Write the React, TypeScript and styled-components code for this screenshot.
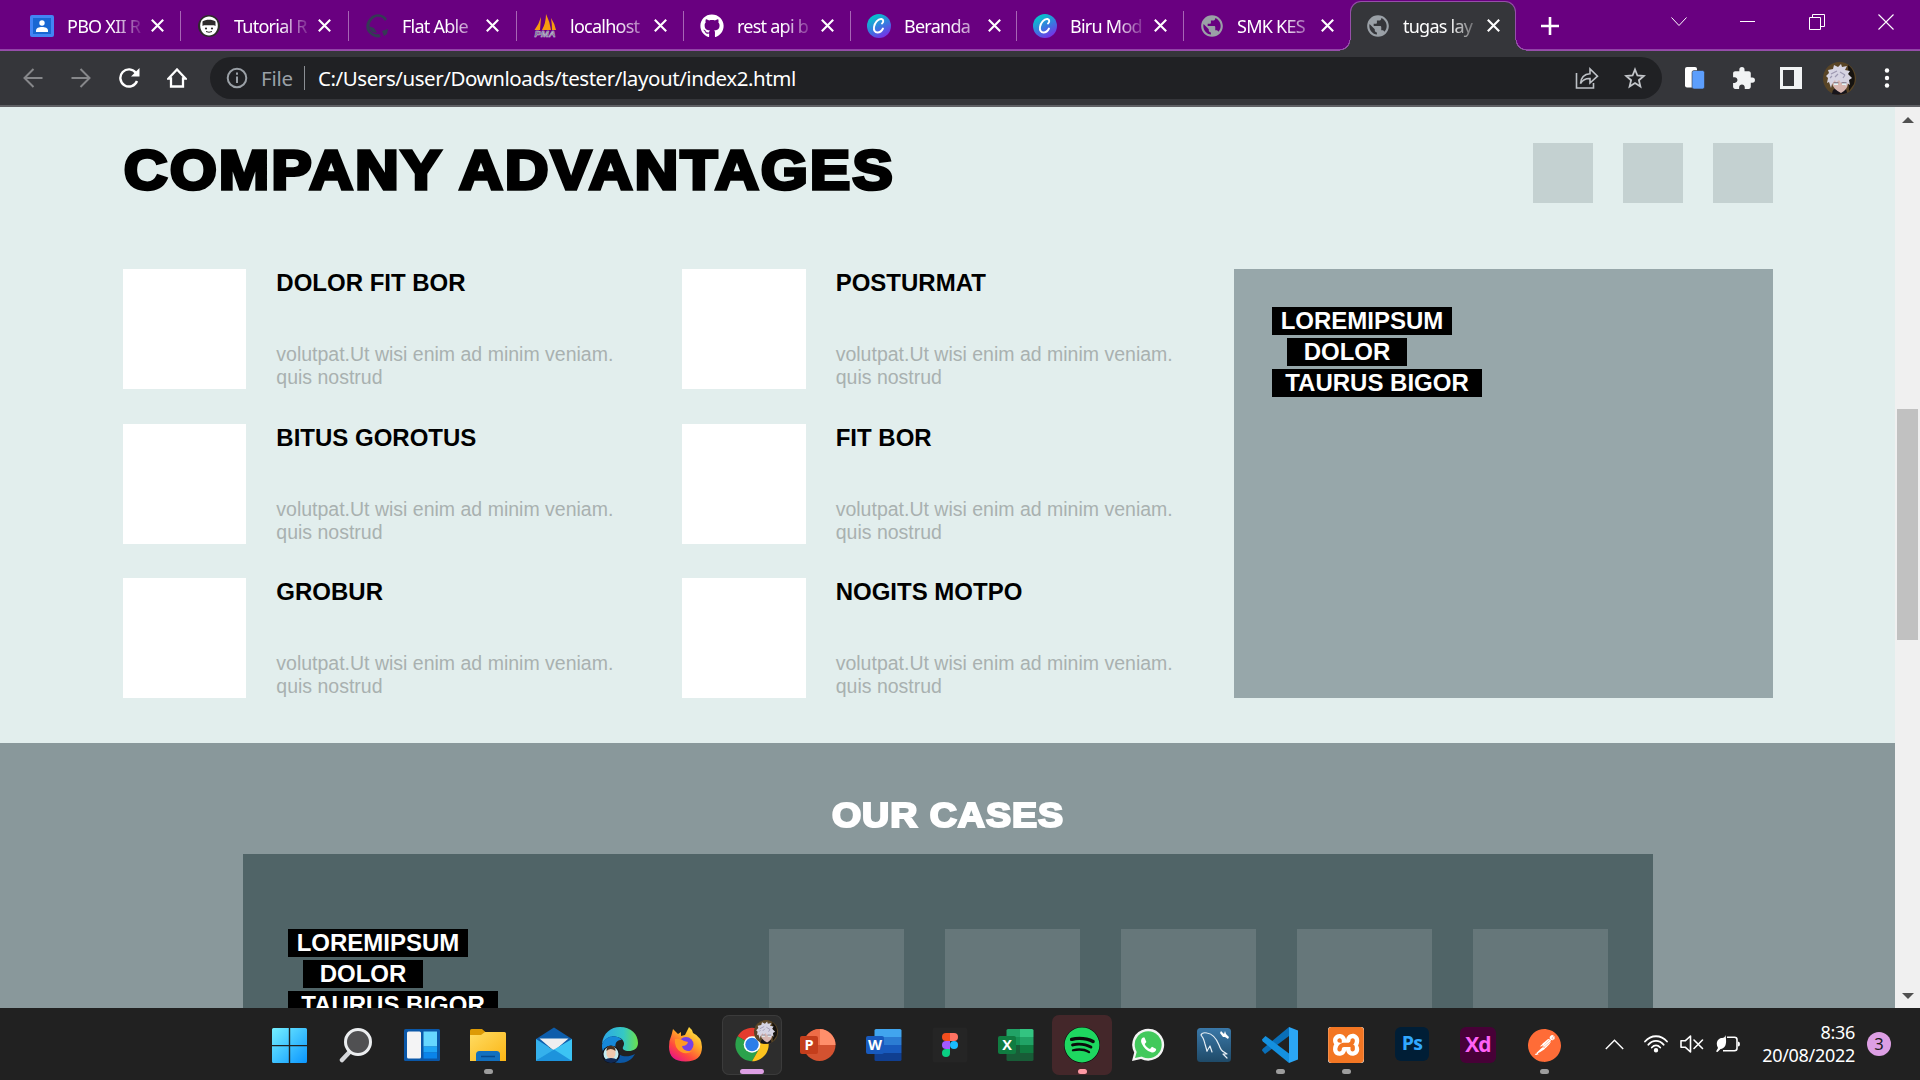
import React from "react";
import styled, { createGlobalStyle, css } from "styled-components";
import { FaGithub, FaSpotify } from "react-icons/fa";
import { SiPostman, SiXampp } from "react-icons/si";
import { MdExtension, MdPublic } from "react-icons/md";

const UI = `"Noto Sans", "Open Sans", sans-serif`;
const ARIAL = `"Liberation Sans", Arial, sans-serif`;

const GlobalStyle = createGlobalStyle`
  * { box-sizing: border-box; }
  html, body { margin: 0; padding: 0; overflow: hidden; }
  h1, h2, h3, p { margin: 0; }
  svg { display: block; flex: none; }
`;

const Screen = styled.div`
  width: 1920px;
  height: 1080px;
  display: flex;
  flex-direction: column;
  overflow: hidden;
  font-family: ${UI};
`;

/* ---------- tab strip ---------- */

const TabStrip = styled.div`
  height: 51px;
  flex: none;
  display: flex;
  background: linear-gradient(#690080 49px, #8d3fa3 49px, #9a52ad 51px);
  padding-left: 14px;
`;

const flare = css`
  content: "";
  position: absolute;
  bottom: 0;
  width: 11px;
  height: 11px;
`;

const TabBox = styled.div<{ $width: number; $active?: boolean }>`
  width: ${(p) => p.$width}px;
  height: 51px;
  flex: none;
  display: flex;
  align-items: center;
  padding-left: 16px;
  position: relative;
  ${(p) =>
    p.$active
      ? css`
          height: 50px;
          margin-top: 1px;
          padding-left: 15px;
          padding-bottom: 2px;
          background: #35363a;
          border: 1px solid #964fa9;
          border-bottom: 0;
          border-radius: 11px 11px 0 0;
          &::before {
            ${flare}
            left: -11px;
            background: radial-gradient(circle at 0 0, #690080 8.8px, #964fa9 9.2px, #964fa9 10px, #35363a 10.6px);
          }
          &::after {
            ${flare}
            right: -11px;
            background: radial-gradient(circle at 100% 0, #690080 8.8px, #964fa9 9.2px, #964fa9 10px, #35363a 10.6px);
          }
        `
      : ""}
`;

const TabIcon = styled.span`
  width: 24px;
  height: 24px;
  display: flex;
  align-items: center;
  justify-content: center;
`;

const TabTitle = styled.span<{ $fade: number }>`
  width: 80px;
  margin-left: 13px;
  font-size: 18px;
  line-height: 26px;
  letter-spacing: -0.75px;
  color: #fff;
  white-space: nowrap;
  mask-image: linear-gradient(90deg, #000 46px, transparent ${(p) => p.$fade}px);
`;

const TabClose = styled.span`
  margin-left: 4px;
`;

const TabDivider = styled.i<{ $hidden?: boolean }>`
  width: 1px;
  height: 30px;
  margin-left: auto;
  background: ${(p) => (p.$hidden ? "transparent" : "#a765b5")};
`;

const NewTab = styled.div`
  width: 67px;
  display: flex;
  align-items: center;
  justify-content: center;
`;

const WindowButtons = styled.div`
  margin-left: auto;
  display: flex;
`;

const WindowButton = styled.div`
  width: 69px;
  height: 43px;
  display: flex;
  align-items: center;
  justify-content: center;
`;

/* ---------- toolbar ---------- */

const Toolbar = styled.div`
  height: 54px;
  flex: none;
  display: flex;
  align-items: center;
  padding: 0 9px;
  background: #35363a;
`;

const ToolSlot = styled.span`
  width: 48px;
  height: 42px;
  flex: none;
  display: flex;
  align-items: center;
  justify-content: center;
`;

const Omnibox = styled.div`
  flex: 1;
  height: 42px;
  margin: 0 9px;
  padding: 0 3px 0 16px;
  border-radius: 21px;
  background: #202124;
  display: flex;
  align-items: center;
`;

const Scheme = styled.span`
  width: 43px;
  margin-left: 13px;
  font-size: 20.5px;
  line-height: 30px;
  letter-spacing: -0.2px;
  color: #9aa0a6;
`;

const SchemeRule = styled.i`
  width: 1px;
  height: 24px;
  background: #8b8f94;
`;

const Url = styled.span`
  flex: 1;
  margin-left: 13px;
  font-size: 20.5px;
  line-height: 30px;
  letter-spacing: -0.43px;
  color: #fff;
  white-space: nowrap;
`;

const ToolbarEdge = styled.div`
  height: 2px;
  flex: none;
  background: #5f6064;
`;

/* ---------- web page ---------- */

const Viewport = styled.div`
  height: 901px;
  flex: none;
  display: flex;
  overflow: hidden;
`;

const Page = styled.main`
  width: 1895px;
  height: 901px;
  overflow: hidden;
  font-family: ${ARIAL};
`;

const Advantages = styled.section`
  height: 636px;
  padding: 36px 122px 0 123px;
  background: #e2eeed;
`;

const AdvantagesHead = styled.header`
  height: 60px;
  display: flex;
  justify-content: space-between;
`;

const Title = styled.h1`
  padding-left: 1px;
  font-size: 54.6px;
  line-height: 56px;
  font-weight: 700;
  letter-spacing: 2.2px;
  white-space: nowrap;
  color: #000;
  -webkit-text-stroke: 3.6px #000;
  transform: scaleX(1.1);
  transform-origin: 0 50%;
`;

const Squares = styled.div`
  display: flex;
  gap: 30px;
`;

const Square = styled.div`
  width: 60px;
  height: 60px;
  background: #c4d1d1;
`;

const AdvantagesBody = styled.div`
  display: flex;
  justify-content: space-between;
  margin-top: 66px;
`;

const CardGrid = styled.div`
  display: grid;
  grid-template-columns: 559.4px 520px;
  grid-template-rows: repeat(3, 120px);
  row-gap: 34.5px;
`;

const Card = styled.article`
  display: flex;
  gap: 30px;
`;

const Thumb = styled.div`
  width: 123.3px;
  height: 120px;
  background: #fff;
`;

const CardTitle = styled.h3`
  font-size: 24px;
  line-height: 27px;
  font-weight: 700;
  color: #000;
`;

const CardText = styled.p`
  width: 350px;
  margin-top: 47px;
  font-size: 19.5px;
  line-height: 23px;
  color: #a9b1b0;
`;

const Panel = styled.aside`
  width: 539px;
  height: 429px;
  padding: 38px;
  background: #97a7aa;
`;

const LabelStack = styled.div`
  display: flex;
  flex-direction: column;
  align-items: flex-start;
  gap: 3px;
`;

const Label = styled.span<{ $width: number; $indent?: number }>`
  width: ${(p) => p.$width}px;
  margin-left: ${(p) => p.$indent || 0}px;
  height: 28px;
  font-size: 24px;
  line-height: 27px;
  font-weight: 700;
  text-align: center;
  color: #fff;
  background: #000;
  white-space: nowrap;
`;

const Cases = styled.section`
  height: 400px;
  padding: 52px 242px 0 243px;
  background: #89989b;
`;

const CasesTitle = styled.h2`
  font-size: 34.8px;
  line-height: 40px;
  font-weight: 700;
  letter-spacing: 0.9px;
  text-align: center;
  color: #fff;
  -webkit-text-stroke: 2.2px #fff;
  transform: scaleX(1.08);
`;

const CasesPanel = styled.div`
  height: 300px;
  margin-top: 19px;
  padding: 75px 45px 0;
  display: flex;
  justify-content: space-between;
  background: #506467;
`;

const CaseRow = styled.div`
  display: flex;
  gap: 41px;
`;

const CaseBox = styled.div`
  width: 135px;
  height: 200px;
  background: #66777a;
`;

const Scrollbar = styled.div`
  width: 25px;
  height: 901px;
  padding: 0 2px;
  display: flex;
  flex-direction: column;
  align-items: center;
  background: #f0f0f0;
`;

const ScrollArrow = styled.i<{ $down?: boolean }>`
  width: 0;
  height: 0;
  margin-top: ${(p) => (p.$down ? "auto" : "10px")};
  margin-bottom: ${(p) => (p.$down ? "9px" : "0")};
  border: 6px solid transparent;
  ${(p) => (p.$down ? "border-top-color: #505050; border-bottom: 0;" : "border-bottom-color: #505050; border-top: 0;")}
`;

const ScrollThumb = styled.div`
  width: 21px;
  height: 231px;
  margin-top: 286px;
  background: #c1c1c1;
`;

/* ---------- taskbar ---------- */

const Taskbar = styled.footer`
  height: 72px;
  flex: none;
  display: flex;
  background: #212121;
  padding-left: 257px;
`;

const AppSlot = styled.div<{ $tile?: string; $edge?: string }>`
  width: 60px;
  height: 60px;
  margin: 7px 3px 0;
  flex: none;
  padding-top: 12px;
  display: flex;
  flex-direction: column;
  align-items: center;
  border-radius: 7px;
  background: ${(p) => p.$tile || "transparent"};
  box-shadow: inset 0 0 0 1px ${(p) => p.$edge || "transparent"};
`;

const Indicator = styled.i<{ $width: number; $color: string }>`
  width: ${(p) => p.$width}px;
  height: 5px;
  margin-top: 6px;
  border-radius: 3px;
  background: ${(p) => p.$color};
`;

const IconTile = styled.span<{ $bg: string; $size?: number; $round?: string }>`
  width: ${(p) => p.$size || 36}px;
  height: ${(p) => p.$size || 36}px;
  display: flex;
  align-items: center;
  justify-content: center;
  border-radius: ${(p) => p.$round || "6px"};
  background: ${(p) => p.$bg};
`;

const AdobeMark = styled.span<{ $color: string; $size: number }>`
  font-family: "Open Sans", ${UI};
  font-weight: 700;
  font-size: ${(p) => p.$size}px;
  line-height: 30px;
  letter-spacing: -0.8px;
  padding-bottom: 2px;
  color: ${(p) => p.$color};
`;

const Tray = styled.div`
  margin-left: auto;
  padding-right: 29px;
  height: 72px;
  display: flex;
  align-items: center;
`;

const TraySlot = styled.span<{ $width: number }>`
  width: ${(p) => p.$width}px;
  display: flex;
  justify-content: center;
`;

const Clock = styled.div`
  width: 103px;
  margin-right: 12px;
  font-size: 18px;
  line-height: 23px;
  letter-spacing: -0.3px;
  text-align: right;
  color: #fff;
`;

const Count = styled.span`
  width: 24px;
  height: 24px;
  border-radius: 50%;
  background: #dd9fe4;
  color: #1b1b1b;
  font-size: 16.5px;
  line-height: 24px;
  text-align: center;
`;

/* ---------- drawings ---------- */

const Cross = () => (
  <svg width="13" height="13" viewBox="0 0 13 13" stroke="#fff" strokeWidth="2.1">
    <path d="M.8.8l11.4 11.4M12.2.8L.8 12.2" />
  </svg>
);

const ClassroomIcon = () => (
  <svg width="24" height="22" viewBox="0 0 24 22">
    <rect width="24" height="22" rx="2" fill="#4285f4" />
    <rect x="3" y="3" width="18" height="16" fill="#1967d2" />
    <circle cx="12" cy="8" r="2.7" fill="#fff" />
    <path d="M6 17v-1.5c0-2.500 3-3.500 6-3.500s6 1 6 3.500V17z" fill="#fff" />
  </svg>
);

const TutorialIcon = () => (
  <svg width="22" height="22" viewBox="0 0 22 22">
    <circle cx="11" cy="11" r="11" fill="#2e2b2b" />
    <path d="M11 1.500c5 0 8.800 3.500 8.800 9 0 6-4 10-8.800 10s-8.800-4-8.800-10c0-5.500 3.800-9 8.800-9z" fill="#fff" />
    <path d="M4.500 11V6.500c3-2.500 10-2.500 13 0V11l-1.500-.8H6z" fill="#2e2b2b" />
    <circle cx="8" cy="13.500" r="1.100" fill="#2e2b2b" />
    <circle cx="14" cy="13.500" r="1.100" fill="#2e2b2b" />
    <path d="M8 16.500q3 1.500 6 0" stroke="#2e2b2b" fill="none" />
  </svg>
);

const FlatIcon = () => (
  <svg width="24" height="24" viewBox="0 0 24 24">
    <path
      d="M22 5C18-1 9-1 5 4c-5 5-5 12 0 16 3 3 7 4 11 3l-2-3c-4 1-7-1-9-4C3 11 6 5 11 3c4-1 7 0 9 4z"
      fill="#353a55"
    />
    <path d="M17 17l6-2-1 5-3 2zM3 12l6 2 3 5-5-1z" fill="#353a55" />
  </svg>
);

const PmaIcon = () => (
  <svg width="24" height="24" viewBox="0 0 24 24">
    <path d="M8 3L7 16H1.500Q6 10 8 3zM13 0q4 8 5 16H9q4-7 4-16zM18 4q4 6 5 12h-4q0-6-1-12z" fill="#f89c0e" />
    <text
      x="12"
      y="22.800"
      textAnchor="middle"
      fontFamily="Liberation Sans, sans-serif"
      fontWeight="700"
      fontStyle="italic"
      fontSize="9.500"
      fill="#4a4a6c"
      stroke="#d8d8e4"
      strokeWidth=".5"
    >
      PMA
    </text>
  </svg>
);

const CanvaIcon = ({ id }: { id: string }) => (
  <svg width="24" height="24" viewBox="0 0 24 24">
    <defs>
      <linearGradient id={id} x1=".2" y1="0" x2=".75" y2="1">
        <stop offset=".1" stopColor="#06c2cc" />
        <stop offset=".55" stopColor="#3a78e0" />
        <stop offset="1" stopColor="#7d2ae8" />
      </linearGradient>
    </defs>
    <circle cx="12" cy="12" r="12" fill={`url(#${id})`} />
    <path
      d="M15 9.500c1.500-1 2-4-.5-4.500C11 4.500 7.500 9 7 13c-.5 3.500 1 5.500 3.500 5.500 2.300 0 4.500-2 5.500-4"
      fill="none"
      stroke="#fff"
      strokeWidth="1.900"
      strokeLinecap="round"
    />
  </svg>
);

const GlobeIcon = () => <MdPublic size={26} color="#9aa0a6" />;

const Avatar = ({ size }: { size: number }) => (
  <svg width={size} height={size} viewBox="0 0 33 33">
    <circle cx="16.500" cy="16.500" r="16.500" fill="#594526" />
    <path d="M25 3c6 4 8 12 6 19l-5 7z" fill="#16130f" />
    <path d="M9 32q0-6 7-7 8 0 8 6-7 3-15 1z" fill="#17151b" />
    <path d="M9 14h16v8q-1 6-7 9-8-4-9-10z" fill="#d7b6b0" />
    <path
      d="M4 21l1-5-2-2 3-3-1-3 5-1 1-4 4 2 3-3 1 3 5-1-2 4 5 1-2 3 4 4-3 2 1 5-3-2-1 4-2-5-3 1-2-3-3 3-1-3-3 4-1 4-2-6z"
      fill="#d6d4e2"
    />
    <path d="M8 12l6-3M17 10l5 3M12 15l3-3M20 16l2-3M7 16l2-2" stroke="#9d99b2" strokeWidth="1.200" />
    <path d="M11 22h4M19 22h4" stroke="#e4f4f4" strokeWidth="2" />
    <path d="M10.500 20.800h5M18.500 20.800h5" stroke="#59546e" strokeWidth=".8" />
  </svg>
);

const WindowsLogo = () => (
  <svg width="36" height="36" viewBox="0 0 36 36">
    <defs>
      <linearGradient id="win" x1="0" y1="0" x2="1" y2="1">
        <stop offset="0" stopColor="#75f0ff" />
        <stop offset="1" stopColor="#0a96ff" />
      </linearGradient>
    </defs>
    <path
      d="M1.500 1h15.300v17H0V2.500Q0 1 1.500 1zM18.200 1h15.300Q35 1 35 2.500V18H18.200zM0 19.200h16.800V36H1.500Q0 36 0 34.500zM18.200 19.200H35v15.300q0 1.500-1.500 1.500H18.200z"
      fill="url(#win)"
    />
  </svg>
);

const SearchIcon = () => (
  <svg width="36" height="36" viewBox="0 0 36 36">
    <path d="M12 24.500l-8 8.500" stroke="#d5d7da" strokeWidth="4.500" strokeLinecap="round" />
    <circle cx="20" cy="15" r="12.500" fill="#505052" stroke="#eceef0" strokeWidth="3" />
  </svg>
);

const WidgetsIcon = () => (
  <svg width="36" height="36" viewBox="0 0 36 36">
    <rect y="2" width="36" height="32" rx="1.500" fill="#0a57a8" />
    <rect x="3" y="4.500" width="14" height="27" rx="1.500" fill="#f4f4f5" />
    <path d="M19.500 4.500H33v15H19.500z" fill="#66d7ff" />
    <path d="M19.500 19.500H33v6H19.500z" fill="#1ea4f5" />
    <path d="M19.500 25.500H33v6H19.500z" fill="#0a84ea" />
  </svg>
);

const FolderIcon = () => (
  <svg width="36" height="36" viewBox="0 0 36 36">
    <defs>
      <linearGradient id="fold" x1="0" y1="0" x2="1" y2="1">
        <stop offset="0" stopColor="#ffdc63" />
        <stop offset="1" stopColor="#fbb514" />
      </linearGradient>
    </defs>
    <path d="M0 3.500Q0 2 1.500 2H12l4 3.500L12 9H0z" fill="#dd9a05" />
    <path d="M0 8h11l4-3h19.500Q36 5 36 6.500V34H0z" fill="url(#fold)" />
    <path d="M6 34V27.500Q6 24 9.500 24h17q3.500 0 3.500 3.500V34z" fill="#1270bf" />
    <path d="M11 29.500h14" stroke="#06498c" strokeWidth="1.500" />
  </svg>
);

const MailIcon = () => (
  <svg width="36" height="36" viewBox="0 0 36 36">
    <path d="M0 12L18 .5 36 12v8H0z" fill="#0d5dab" />
    <path d="M3.500 11.500h29L18 24z" fill="#eeeff0" />
    <path d="M0 12l19 12L0 33.500z" fill="#35b1ec" />
    <path d="M36 12L18 22.500 0 33.500q0 .5 1 .5h34q1 0 1-1z" fill="#3cc4f4" />
    <path d="M18 22.500L36 34H1q-1 0-1-.5z" fill="#1d93dc" />
  </svg>
);

const EdgeIcon = () => (
  <svg width="36" height="36" viewBox="0 0 36 36">
    <defs>
      <linearGradient id="edgeA">
        <stop offset="0" stopColor="#2ca6e8" />
        <stop offset=".6" stopColor="#35c8c4" />
        <stop offset="1" stopColor="#6be04c" />
      </linearGradient>
    </defs>
    <path
      d="M0 17C1 6 9 0 18 0c11 0 18 7 18 16 0 6-5 8-9 8-5 0-7-2-6-4 2-3 1-7-3-9C12 8 4 10 0 17z"
      fill="url(#edgeA)"
    />
    <path d="M0 18C3 9 13 7 19 12c-5 0-7 5-5 11 3 7 11 8 19 4C30 33 24 36 18 36 8 36-1 28 0 18z" fill="#0b57a4" />
    <path d="M20 13c-6-1-8 5-6 10-1 4-6 8-8 6-5-4-6-8-6-11C3 9 14 7 20 13z" fill="#1688d8" />
    <circle cx="9" cy="27.500" r="9" fill="#10121a" />
    <circle cx="9" cy="27" r="7.500" fill="#c3edf2" />
    <path d="M4.500 24q0-5 4.500-5t4.500 5v4q-2 4-4.500 4T4.500 28z" fill="#f0c9ae" />
    <path d="M4.500 24q0-6 5-5 4 0 4 5-5-4-9 0z" fill="#47301f" />
    <path d="M2 33q7-4 14 0-7 6-14 0z" fill="#102a55" />
  </svg>
);

const FirefoxIcon = () => (
  <svg width="36" height="36" viewBox="0 0 36 36">
    <defs>
      <linearGradient id="fox" x1=".9" y1="0" x2=".2" y2="1">
        <stop offset="0" stopColor="#fff44f" />
        <stop offset=".4" stopColor="#ffa726" />
        <stop offset=".72" stopColor="#ff4a3d" />
        <stop offset="1" stopColor="#e5108c" />
      </linearGradient>
    </defs>
    <path
      d="M3.500 8L5 2l5 5 3-2 0 4 4-1 4-8q3 2 4 6 9 4 9 14 0 14.500-16.500 14.500T1 20Q1 13 3.500 8z"
      fill="url(#fox)"
    />
    <circle cx="18" cy="17.500" r="7.500" fill="#7542e5" />
    <path d="M7 12q5-1 9 2l4 1q-1 4-6 4 1 6 10 5-5 4-11 1-7-4-6-13z" fill="#ff9a24" />
  </svg>
);

const IconBox = styled.span`
  position: relative;
  width: 36px;
  height: 36px;
`;

const ProfileBadge = styled.span`
  position: absolute;
  top: -7px;
  left: 20px;
`;

const ChromeIcon = () => (
  <IconBox>
    <svg width="36" height="36" viewBox="0 0 36 36">
      <path d="M18 17.500L3.600 9.200A16.700 16.700 0 0 1 32.500 9.200H18z" fill="#e33b2e" />
      <path d="M18 17.500L3.600 9.200A16.700 16.700 0 0 0 18 34.200L25.200 21.700z" fill="#2ba24c" />
      <path d="M18 9.200h14.500A16.700 16.700 0 0 1 18 34.200L25.200 21.700z" fill="#fcc31e" />
      <circle cx="18" cy="17.500" r="8.300" fill="#fff" />
      <circle cx="18" cy="17.500" r="6.700" fill="#2b7de9" />
    </svg>
    <ProfileBadge>
      <Avatar size={24} />
    </ProfileBadge>
  </IconBox>
);

const OfficeLetter = styled.span<{ $bg: string }>`
  position: absolute;
  left: 0;
  top: 9px;
  width: 18px;
  height: 18px;
  border-radius: 2px;
  background: ${(p) => p.$bg};
  color: #fff;
  font-family: "Open Sans", sans-serif;
  font-size: 14.5px;
  font-weight: 700;
  line-height: 18px;
  text-align: center;
`;

const Office = ({ letter, bg, children }: { letter: string; bg: string; children: React.ReactNode }) => (
  <IconBox>
    <svg width="36" height="36" viewBox="0 0 36 36">
      {children}
    </svg>
    <OfficeLetter $bg={bg}>{letter}</OfficeLetter>
  </IconBox>
);

const FigmaIcon = () => (
  <svg width="36" height="36" viewBox="0 0 36 36">
    <rect x=".5" y=".5" width="35" height="35" rx="3" fill="#252525" />
    <path d="M18 6h-4a4 4 0 0 0 0 8h4z" fill="#f24e1e" />
    <path d="M18 6h4a4 4 0 0 1 0 8h-4z" fill="#ff7262" />
    <path d="M18 14h-4a4 4 0 0 0 0 8h4z" fill="#a259ff" />
    <circle cx="22" cy="18" r="4" fill="#1abcfe" />
    <path d="M18 22h-4a4 4 0 1 0 4 4z" fill="#0acf83" />
  </svg>
);

const WhatsAppIcon = () => (
  <svg width="36" height="36" viewBox="0 0 36 36">
    <path d="M2 34l2.200-8.500A16 16 0 1 1 11 32z" fill="#f4f4f4" />
    <circle cx="18.200" cy="17.800" r="13.500" fill="#42c95c" />
    <path d="M5 31l2-7 5 5.500z" fill="#42c95c" />
    <path
      d="M13 10.500c-2 1-2.500 3.500-1.300 6 2 4.500 5 7.500 9.500 8.800 2.500.7 5-.8 5-3.300l-4.200-2.300-2 2.200c-2.300-.9-4.300-2.700-5.300-5l1.700-2-1.900-4.400z"
      fill="#fff"
    />
  </svg>
);

const WorkbenchIcon = () => (
  <svg width="36" height="36" viewBox="0 0 36 36">
    <defs>
      <linearGradient id="wb" x1="0" y1="0" x2="0" y2="1">
        <stop offset="0" stopColor="#3a78a8" />
        <stop offset="1" stopColor="#1f4a68" />
      </linearGradient>
    </defs>
    <rect x="1" y="1" width="34" height="34" rx="3.500" fill="url(#wb)" />
    <g fill="none" stroke="#e6eef4" strokeWidth="1.200" strokeLinecap="round" strokeLinejoin="round">
      <path d="M11 24L9 17Q8 13 7 11L5 8q1-3 6-2c7 1 10 7 12 12 1 3 2 6 5 7l3 2-4 0 4 4" />
      <path d="M11 24l3-5 2 6" />
    </g>
    <path d="M25 4l3 3 1-3 1 3 3 3-1 2-3-2-2 0-3-4z" fill="#fff" />
  </svg>
);

const VsCodeIcon = () => (
  <svg width="36" height="36" viewBox="0 0 36 36">
    <path d="M0 23.500l3 3.500L27 9V0L1 21.500Q0 22.500 0 23.500z" fill="#0a6fb8" />
    <path d="M0 12.500L3.500 9 27 26.500V36L.8 14.500Q0 13.500 0 12.500z" fill="#1490df" />
    <path d="M27 0l9 3.500v29L27 36z" fill="#2ba6f5" />
  </svg>
);

const WifiIcon = () => (
  <svg width="24" height="18" viewBox="0 0 24 18" fill="none" stroke="#fff" strokeWidth="1.800" strokeLinecap="round">
    <path d="M1 6.500C7-.5 17-.5 23 6.500M4.400 9.700c4.400-5 10.800-5 15.200 0M7.800 12.500c2.500-2.800 5.900-2.800 8.400 0" />
    <circle cx="12" cy="15.300" r="1.300" fill="#fff" />
  </svg>
);

const MuteIcon = () => (
  <svg width="24" height="18" viewBox="0 0 24 18" fill="none" stroke="#fff" strokeWidth="1.600" strokeLinejoin="round">
    <path d="M1 5.800h4.200L10.500 1v16l-5.300-4.800H1z" />
    <path d="M14 5l8.500 8.500M22.500 5L14 13.500" strokeLinecap="round" />
  </svg>
);

const BatteryIcon = () => (
  <svg width="24" height="18" viewBox="0 0 24 18">
    <path d="M11 2.200h7.500q2.500 0 2.500 2.500v8.600q0 2.500-2.500 2.500H7" fill="none" stroke="#fff" strokeWidth="1.600" />
    <path d="M22 6.500q2 0 2 2.500t-2 2.500z" fill="#fff" />
    <path d="M9.500 0C10.500 6 11 13 4.500 14L1.500 17 0 16.500 2 13C-1 8 2 3 6 3q3 0 3.500-3z" fill="#fff" />
  </svg>
);

/* ---------- data ---------- */

type Tab = { title: string; icon: React.ReactNode; width: number; fade?: number; active?: boolean };

const tabs: Tab[] = [
  { title: "PBO XII R", width: 167, icon: <ClassroomIcon /> },
  { title: "Tutorial R", width: 168, icon: <TutorialIcon /> },
  { title: "Flat Able", width: 168, fade: 90, icon: <FlatIcon /> },
  { title: "localhost", width: 167, fade: 90, icon: <PmaIcon /> },
  { title: "rest api b", width: 167, icon: <FaGithub size={24} color="#fff" /> },
  { title: "Beranda", width: 166, fade: 95, icon: <CanvaIcon id="canva1" /> },
  { title: "Biru Mod", width: 167, icon: <CanvaIcon id="canva2" /> },
  { title: "SMK KES", width: 166, fade: 84, icon: <GlobeIcon /> },
  { title: "tugas lay", width: 166, fade: 80, icon: <GlobeIcon />, active: true },
];

const cards = ["DOLOR FIT BOR", "POSTURMAT", "BITUS GOROTUS", "FIT BOR", "GROBUR", "NOGITS MOTPO"];

const GREY = "#9d9d9d";

type Entry = { icon: React.ReactNode; tile?: string; edge?: string; bar?: [number, string] };

const apps: Entry[] = [
  { icon: <WindowsLogo /> },
  { icon: <SearchIcon /> },
  { icon: <WidgetsIcon /> },
  { icon: <FolderIcon />, bar: [9, GREY] },
  { icon: <MailIcon /> },
  { icon: <EdgeIcon /> },
  { icon: <FirefoxIcon /> },
  { icon: <ChromeIcon />, tile: "#2d2d2d", edge: "#3b3b3b", bar: [24, "#dd9fe4"] },
  {
    icon: (
      <Office letter="P" bg="#c43e1c">
        <circle cx="19.500" cy="18" r="16" fill="#d35230" />
        <path d="M19.500 2a16 16 0 0 1 16 16h-16z" fill="#ff8f6b" />
        <path d="M19.500 2a16 16 0 0 0-16 16h16z" fill="#ed6c47" />
      </Office>
    ),
  },
  {
    icon: (
      <Office letter="W" bg="#185abd">
        <path d="M8.500 3.500Q8.500 2 10 2h24q1.500 0 1.500 1.500V10h-27z" fill="#41a5ee" />
        <path d="M8.500 10h27v8h-27z" fill="#2b7cd3" />
        <path d="M8.500 18h27v8h-27z" fill="#185abd" />
        <path d="M8.500 26h27v6.500Q35.500 34 34 34H10q-1.500 0-1.500-1.500z" fill="#103f91" />
      </Office>
    ),
  },
  { icon: <FigmaIcon /> },
  {
    icon: (
      <Office letter="X" bg="#107c41">
        <path d="M8.500 3.500Q8.500 2 10 2h12v8H8.500z" fill="#21a366" />
        <path d="M22 2h12q1.500 0 1.500 1.500V10H22z" fill="#33c481" />
        <path d="M8.500 10H22v8H8.500z" fill="#159154" />
        <path d="M22 10h13.500v8H22z" fill="#21a366" />
        <path d="M8.500 18H22v8H8.500z" fill="#185c37" />
        <path d="M22 18h13.500v8H22z" fill="#107c41" />
        <path d="M8.500 26h27v6.500Q35.500 34 34 34H10q-1.500 0-1.500-1.500z" fill="#185c37" />
      </Office>
    ),
  },
  {
    icon: (
      <IconTile $bg="#0b0b0b" $round="50%">
        <FaSpotify size={36} color="#1ed760" />
      </IconTile>
    ),
    tile: "#44272a",
    bar: [9, "#ff99a4"],
  },
  { icon: <WhatsAppIcon /> },
  { icon: <WorkbenchIcon /> },
  { icon: <VsCodeIcon />, bar: [9, GREY] },
  {
    icon: (
      <IconTile $bg="#fff" $round="3px">
        <SiXampp size={36} color="#f37623" />
      </IconTile>
    ),
    bar: [9, GREY],
  },
  {
    icon: (
      <IconTile $bg="#001e36" $size={34}>
        <AdobeMark $color="#31a8ff" $size={19.5}>
          Ps
        </AdobeMark>
      </IconTile>
    ),
  },
  {
    icon: (
      <IconTile $bg="#470137">
        <AdobeMark $color="#ff61f6" $size={21}>
          Xd
        </AdobeMark>
      </IconTile>
    ),
  },
  {
    icon: (
      <IconTile $bg="transparent">
        <IconTile $bg="#fff" $size={31} $round="50%">
          <SiPostman size={33} color="#ff6c37" />
        </IconTile>
      </IconTile>
    ),
    bar: [9, GREY],
  },
];

const Labels = () => (
  <LabelStack>
    <Label $width={180}>LOREMIPSUM</Label>
    <Label $width={120} $indent={15}>
      DOLOR
    </Label>
    <Label $width={210}>TAURUS BIGOR</Label>
  </LabelStack>
);

export default function App() {
  return (
    <Screen>
      <GlobalStyle />
      <TabStrip>
        {tabs.map((t, i) => (
          <TabBox key={t.title} $width={t.width} $active={t.active}>
            <TabIcon>{t.icon}</TabIcon>
            <TabTitle $fade={t.fade || 78}>{t.title}</TabTitle>
            <TabClose>
              <Cross />
            </TabClose>
            <TabDivider $hidden={i >= 7} />
          </TabBox>
        ))}
        <NewTab>
          <svg width="18" height="18" viewBox="0 0 18 18" stroke="#fff" strokeWidth="2.600">
            <path d="M9 0v18M0 9h18" />
          </svg>
        </NewTab>
        <WindowButtons>
          <WindowButton>
            <svg width="16" height="10" viewBox="0 0 16 10" fill="none" stroke="#fff">
              <path d="M.5.500L8 8.500l7.500-8" />
            </svg>
          </WindowButton>
          <WindowButton>
            <svg width="15" height="1" viewBox="0 0 15 1">
              <path d="M0 0h15v1H0z" fill="#fff" />
            </svg>
          </WindowButton>
          <WindowButton>
            <svg width="16" height="16" viewBox="0 0 16 16" fill="none" stroke="#fff">
              <path d="M.5 3.500h11v12H.5zM3.500 3.500v-3h12v12h-4" />
            </svg>
          </WindowButton>
          <WindowButton>
            <svg width="16" height="16" viewBox="0 0 16 16" stroke="#fff" strokeWidth="1.100">
              <path d="M.5.500l15 15M15.500.500l-15 15" />
            </svg>
          </WindowButton>
        </WindowButtons>
      </TabStrip>

      <Toolbar>
        <ToolSlot>
          <svg width="20" height="20" viewBox="0 0 20 20" fill="none" stroke="#86878a" strokeWidth="2">
            <path d="M19.500 10H2M10.500 1L1.500 10l9 9" />
          </svg>
        </ToolSlot>
        <ToolSlot>
          <svg width="20" height="20" viewBox="0 0 20 20" fill="none" stroke="#86878a" strokeWidth="2">
            <path d="M.5 10H18M9.500 1l9 9-9 9" />
          </svg>
        </ToolSlot>
        <ToolSlot>
          <svg width="21" height="20" viewBox="0 0 21 20" fill="none" stroke="#fff" strokeWidth="2.400">
            <path d="M17 5A8.600 8.600 0 1 0 18 13" />
            <path d="M20.500 0v8.500H12z" fill="#fff" stroke="none" />
          </svg>
        </ToolSlot>
        <ToolSlot>
          <svg width="20" height="20" viewBox="0 0 20 20" fill="none" stroke="#fff" strokeWidth="2.300">
            <path d="M1.500 10.500H4V18.500h12V10.500h2.500L10 1.500z" />
          </svg>
        </ToolSlot>
        <Omnibox>
          <svg width="22" height="22" viewBox="0 0 22 22" fill="none" stroke="#9aa0a6" strokeWidth="2">
            <circle cx="11" cy="11" r="9.300" />
            <path d="M11 9.500v6.500M11 5.500v2.200" />
          </svg>
          <Scheme>File</Scheme>
          <SchemeRule />
          <Url>C:/Users/user/Downloads/tester/layout/index2.html</Url>
          <ToolSlot>
            <svg width="24" height="22" viewBox="0 0 24 22" fill="none" stroke="#bdc1c6" strokeWidth="1.600">
              <path d="M1.500 6v15h17v-5" />
              <path d="M5.500 16.500c.5-6 4-9.500 9.500-9.800V2l7.500 7.200L15 16v-4.500c-4-.2-7 1-9.500 5z" />
            </svg>
          </ToolSlot>
          <ToolSlot>
            <svg width="22" height="22" viewBox="0 0 22 22" fill="none" stroke="#c3c6ca" strokeWidth="1.800">
              <path d="M11 2.500l2.400 6 6.400.5-4.900 4.200 1.500 6.300L11 16.100l-5.400 3.400 1.500-6.300L2.200 9l6.400-.5z" />
            </svg>
          </ToolSlot>
        </Omnibox>
        <ToolSlot>
          <svg width="20" height="22" viewBox="0 0 20 22">
            <rect x="0" y="0" width="12" height="20.500" rx="2" fill="#fff" />
            <rect x="7" y="3.500" width="12.500" height="18.500" rx="2" fill="#5c9efc" stroke="#35363a" strokeWidth=".6" />
          </svg>
        </ToolSlot>
        <ToolSlot>
          <MdExtension size={25} color="#f1f3f4" />
        </ToolSlot>
        <ToolSlot>
          <svg width="22" height="22" viewBox="0 0 22 22">
            <path d="M0 0h22v22H0zM3 3v16h11V3z" fill="#f1f3f4" fillRule="evenodd" />
          </svg>
        </ToolSlot>
        <ToolSlot>
          <Avatar size={33} />
        </ToolSlot>
        <ToolSlot>
          <svg width="6" height="20" viewBox="0 0 6 20" fill="#fff">
            <circle cx="3" cy="2.500" r="2.200" />
            <circle cx="3" cy="10" r="2.200" />
            <circle cx="3" cy="17.500" r="2.200" />
          </svg>
        </ToolSlot>
      </Toolbar>
      <ToolbarEdge />

      <Viewport>
        <Page>
          <Advantages>
            <AdvantagesHead>
              <Title>COMPANY ADVANTAGES</Title>
              <Squares>
                <Square />
                <Square />
                <Square />
              </Squares>
            </AdvantagesHead>
            <AdvantagesBody>
              <CardGrid>
                {cards.map((name) => (
                  <Card key={name}>
                    <Thumb />
                    <div>
                      <CardTitle>{name}</CardTitle>
                      <CardText>volutpat.Ut wisi enim ad minim veniam. quis nostrud</CardText>
                    </div>
                  </Card>
                ))}
              </CardGrid>
              <Panel>
                <Labels />
              </Panel>
            </AdvantagesBody>
          </Advantages>
          <Cases>
            <CasesTitle>OUR CASES</CasesTitle>
            <CasesPanel>
              <Labels />
              <CaseRow>
                <CaseBox />
                <CaseBox />
                <CaseBox />
                <CaseBox />
                <CaseBox />
              </CaseRow>
            </CasesPanel>
          </Cases>
        </Page>
        <Scrollbar>
          <ScrollArrow />
          <ScrollThumb />
          <ScrollArrow $down />
        </Scrollbar>
      </Viewport>

      <Taskbar>
        {apps.map((a, i) => (
          <AppSlot key={i} $tile={a.tile} $edge={a.edge}>
            {a.icon}
            {a.bar && <Indicator $width={a.bar[0]} $color={a.bar[1]} />}
          </AppSlot>
        ))}
        <Tray>
          <TraySlot $width={36}>
            <svg width="19" height="11" viewBox="0 0 19 11" fill="none" stroke="#fff" strokeWidth="1.400">
              <path d="M.8 10L9.500 1.300 18.200 10" />
            </svg>
          </TraySlot>
          <TraySlot $width={48}>
            <WifiIcon />
          </TraySlot>
          <TraySlot $width={24}>
            <MuteIcon />
          </TraySlot>
          <TraySlot $width={48}>
            <BatteryIcon />
          </TraySlot>
          <Clock>
            8:36
            <br />
            20/08/2022
          </Clock>
          <Count>3</Count>
        </Tray>
      </Taskbar>
    </Screen>
  );
}
